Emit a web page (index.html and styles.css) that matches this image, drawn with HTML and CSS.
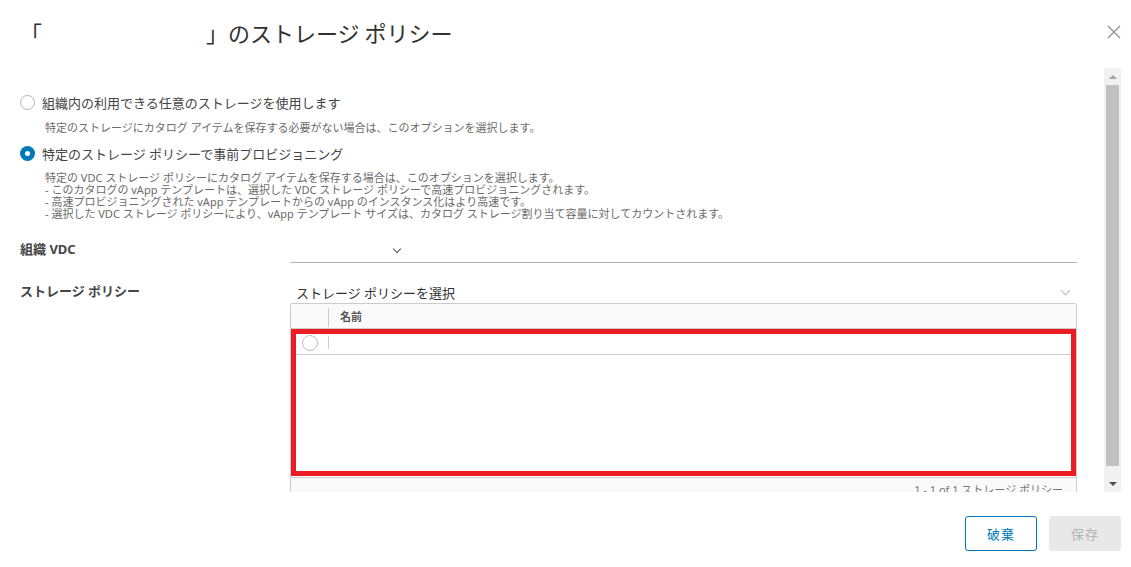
FILE: index.html
```html
<!DOCTYPE html>
<html lang="ja">
<head>
    <meta charset="UTF-8">
    <meta name="viewport" content="width=device-width, initial-scale=1.0">
    <title>ストレージ ポリシー</title>
    <link rel="stylesheet" href="styles.css">
</head>
<body>
    <div class="modal">
        <!-- header -->
        <div class="modal-header">
            <h1 class="modal-title">「<span class="catalog-name"></span>」のストレージ ポリシー</h1>
            <button class="close-btn" aria-label="閉じる">
                <svg width="14" height="14" viewBox="0 0 14 14"><path d="M1 1 L13 13 M13 1 L1 13" stroke="#8c8c8c" stroke-width="1.2" fill="none"/></svg>
            </button>
        </div>

        <!-- scrollable body -->
        <div class="modal-body">
            <div class="body-content">
                <label class="radio-row">
                    <span class="radio"></span>
                    <span class="radio-label">組織内の利用できる任意のストレージを使用します</span>
                </label>
                <p class="help">特定のストレージにカタログ アイテムを保存する必要がない場合は、このオプションを選択します。</p>

                <label class="radio-row second">
                    <span class="radio checked"></span>
                    <span class="radio-label">特定のストレージ ポリシーで事前プロビジョニング</span>
                </label>
                <p class="help multi">特定の VDC ストレージ ポリシーにカタログ アイテムを保存する場合は、このオプションを選択します。<br>
                - このカタログの vApp テンプレートは、選択した VDC ストレージ ポリシーで高速プロビジョニングされます。<br>
                - 高速プロビジョニングされた vApp テンプレートからの vApp のインスタンス化はより高速です。<br>
                - 選択した VDC ストレージ ポリシーにより、vApp テンプレート サイズは、カタログ ストレージ割り当て容量に対してカウントされます。</p>

                <div class="form-row vdc-row">
                    <div class="form-label">組織 VDC</div>
                    <div class="select-line">
                        <span class="chevron dark"></span>
                    </div>
                </div>

                <div class="form-row policy-row">
                    <div class="form-label">ストレージ ポリシー</div>
                    <div class="policy-field">
                        <div class="policy-select">
                            <span>ストレージ ポリシーを選択</span>
                            <span class="chevron light"></span>
                        </div>
                        <div class="datagrid">
                            <div class="dg-header">
                                <div class="dg-select-col"></div>
                                <div class="dg-col">名前</div>
                            </div>
                            <div class="dg-body">
                                <div class="dg-row">
                                    <div class="dg-select-col"><span class="radio small"></span></div>
                                    <div class="dg-col"></div>
                                </div>
                            </div>
                            <div class="dg-footer">1 - 1 of 1 ストレージ ポリシー</div>
                            <div class="highlight"></div>
                        </div>
                    </div>
                </div>
            </div>

            <!-- scrollbar -->
            <div class="scrollbar">
                <div class="sb-btn"><span class="arrow-up"></span></div>
                <div class="sb-track"><div class="sb-thumb"></div></div>
                <div class="sb-btn"><span class="arrow-down"></span></div>
            </div>
        </div>

        <!-- footer -->
        <div class="modal-footer">
            <button class="btn btn-outline">破棄</button>
            <button class="btn btn-disabled" disabled>保存</button>
        </div>
    </div>
</body>
</html>
```

FILE: styles.css
```css
* {
    margin: 0;
    padding: 0;
    box-sizing: border-box;
}
body {
    font-family: "Noto Sans", "Noto Sans CJK JP", sans-serif;
    background: #fff;
    color: #565656;
    width: 1131px;
    height: 567px;
    overflow: hidden;
}

/* header */
.modal-header {
    height: 68px;
    display: flex;
    justify-content: space-between;
    align-items: flex-start;
    padding: 18px 10px 0 20px;
}
.modal-title {
    font-size: 22px;
    line-height: 28px;
    font-weight: 400;
    color: #313131;
    font-family: "Noto Sans CJK JP", sans-serif;
}
.catalog-name {
    display: inline-block;
    width: 164px;
}
.close-btn {
    background: none;
    border: none;
    margin-top: 7px;
    width: 14px;
    height: 14px;
}

/* body */
.modal-body {
    height: 424px;
    display: flex;
    padding-right: 10px;
}
.body-content {
    flex: 1;
    overflow: hidden;
    padding: 24px 27px 0 20px;
}
.radio-row {
    display: flex;
    align-items: center;
    height: 20px;
    gap: 7px;
}
.radio-row.second {
    margin-top: 8px;
}
.radio {
    width: 15px;
    height: 15px;
    border-radius: 50%;
    border: 1px solid #b3b3b3;
    background: #fff;
    flex-shrink: 0;
}
.radio.checked {
    border: none;
    box-shadow: inset 0 0 0 5px #0079b8;
}
.radio.small {
    width: 16px;
    height: 16px;
    border-color: #bdbdbd;
}
.radio-label {
    font-size: 13px;
    color: #454545;
}
.help {
    font-size: 11px;
    line-height: 14px;
    color: #6a6a6a;
    margin: 9px 0 0 25px;
}
.help.multi {
    line-height: 12px;
    margin-top: 9px;
}

/* form rows */
.form-row {
    display: grid;
    grid-template-columns: 270px 1fr;
}
.vdc-row {
    margin-top: 19px;
}
.policy-row {
    margin-top: 18px;
}
.form-label {
    font-size: 13px;
    line-height: 20px;
    font-weight: 700;
    color: #454545;
}
.select-line {
    height: 24px;
    border-bottom: 1px solid #b3b3b3;
    display: flex;
    align-items: flex-start;
    padding: 7px 0 0 104px;
}
.chevron {
    display: block;
    width: 6px;
    height: 6px;
    border-right: 1px solid #555;
    border-bottom: 1px solid #555;
    transform: rotate(45deg);
}
.chevron.light {
    width: 7px;
    height: 7px;
    border-color: #bbb;
}
.policy-select {
    display: flex;
    justify-content: space-between;
    align-items: center;
    height: 22px;
    padding: 0 8px 0 6px;
    font-size: 13px;
    color: #313131;
}
.policy-select .chevron {
    margin-top: -4px;
}

/* datagrid */
.datagrid {
    position: relative;
    border: 1px solid #ccc;
    border-radius: 2px;
}
.dg-header {
    display: flex;
    height: 25px;
    background: #fafafa;
    border-bottom: 1px solid #ccc;
}
.dg-select-col {
    width: 38px;
    display: flex;
    align-items: center;
    justify-content: center;
    border-right: 1px solid #ccc;
    margin: 4px 0 1px;
}
.dg-col {
    flex: 1;
    font-size: 11px;
    font-weight: 700;
    color: #565656;
    padding-left: 11px;
    display: flex;
    align-items: center;
}
.dg-body {
    height: 148px;
    background: #fff;
}
.dg-row {
    display: flex;
    height: 26px;
    border-bottom: 1px solid #ccc;
}
.dg-row .dg-select-col {
    margin: 7px 0 5px;
    border-color: #ccc;
}
.dg-footer {
    background: #fafafa;
    border-top: 1px solid #ccc;
    height: 32px;
    font-size: 11px;
    line-height: 14px;
    color: #777;
    text-align: right;
    padding: 5px 13px 0 0;
}

/* red annotation box */
.highlight {
    position: absolute;
    left: 0;
    top: 25px;
    width: 785px;
    height: 147px;
    border: 5px solid #ec1c24;
}

/* scrollbar */
.scrollbar {
    width: 17px;
    background: #f1f1f1;
    display: flex;
    flex-direction: column;
}
.sb-btn {
    height: 17px;
    display: flex;
    align-items: center;
    justify-content: center;
}
.sb-track {
    flex: 1;
    padding: 0 2px 9px;
}
.sb-thumb {
    height: 100%;
    background: #c1c1c1;
}
.arrow-up {
    border-left: 4px solid transparent;
    border-right: 4px solid transparent;
    border-bottom: 4px solid #a3a3a3;
}
.arrow-down {
    border-left: 4px solid transparent;
    border-right: 4px solid transparent;
    border-top: 4px solid #505050;
}

/* footer */
.modal-footer {
    display: flex;
    justify-content: flex-end;
    gap: 12px;
    padding: 24px 10px 0 0;
}
.btn {
    width: 72px;
    height: 35px;
    border-radius: 3px;
    font-family: "Noto Sans CJK JP", sans-serif;
    font-size: 13px;
    letter-spacing: 1px;
}
.btn-outline {
    background: #fff;
    border: 1px solid #0079b8;
    color: #0079b8;
}
.btn-disabled {
    background: #e8e8e8;
    border: 1px solid #e8e8e8;
    color: #b3b3b3;
}
```
